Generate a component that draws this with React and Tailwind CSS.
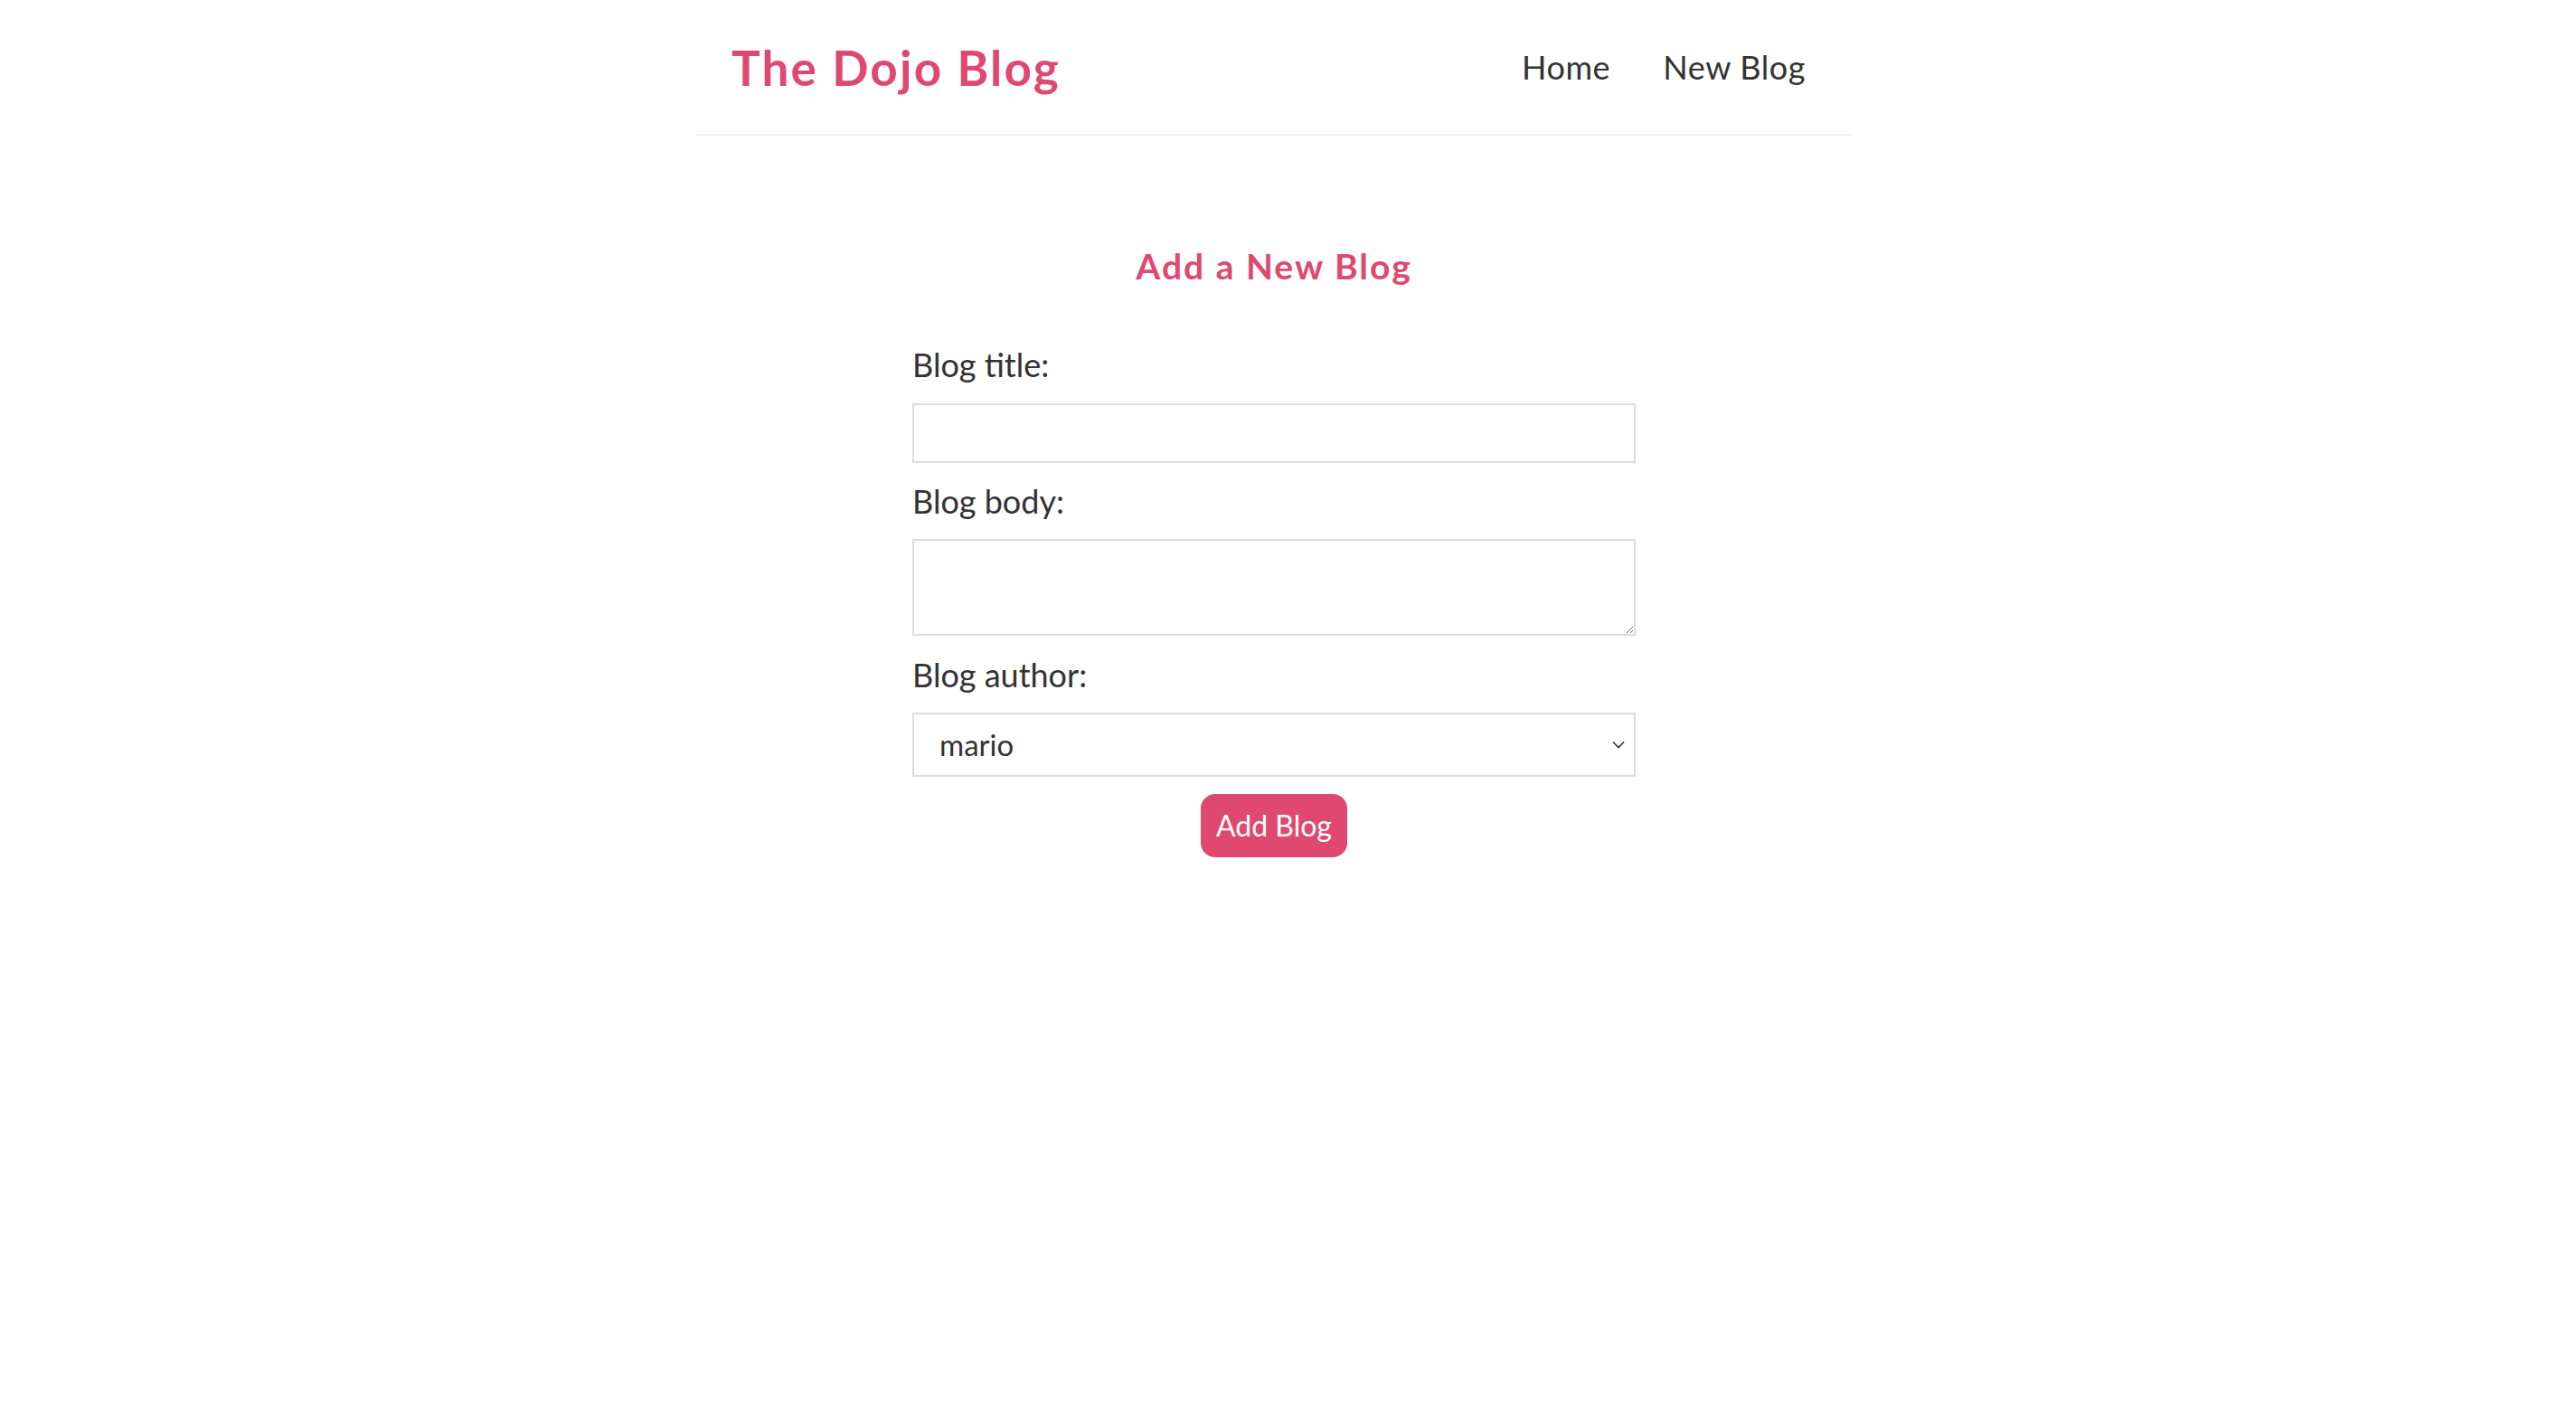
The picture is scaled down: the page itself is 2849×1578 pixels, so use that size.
import React from "react";

export default function App() {
  const font = { fontFamily: "Lato, 'Noto Sans', sans-serif" };
  return (
    <div className="w-[2818px] min-h-[1578px] bg-white text-[#333]" style={font}>
      <nav className="mx-auto flex h-[150px] w-[1280px] items-center border-b-2 border-[#f2f2f2] pl-[40px] pr-[52px]">
        <h1 className="text-[53px] font-bold leading-none tracking-[2.2px] text-[#df496f]">The Dojo Blog</h1>
        <div className="ml-auto flex items-center gap-[58px] text-[36px] leading-none tracking-[0.6px]">
          <a href="#" className="text-[#333]">Home</a>
          <a href="#" className="text-[#333]">New Blog</a>
        </div>
      </nav>
      <div className="mx-auto flex w-[800px] flex-col">
        <h2 className="mt-[125px] text-center text-[39px] font-bold leading-none tracking-[2px] text-[#df496f]">
          Add a New Blog
        </h2>
        <form className="flex flex-col" onSubmit={(e) => e.preventDefault()}>
          <label className="mt-[71px] block text-left text-[36px] leading-none">Blog title:</label>
          <input
            type="text"
            className="mt-[25px] block h-[66px] w-full border-2 border-[#ddd] px-[20px] text-[34px] outline-none"
          />
          <label className="mt-[24px] block text-left text-[36px] leading-none">Blog body:</label>
          <textarea className="mt-[24px] block h-[107px] w-full border-2 border-[#ddd] px-[20px] py-[12px] text-[34px] outline-none" />
          <label className="mt-[25px] block text-left text-[36px] leading-none">Blog author:</label>
          <div className="relative mt-[24px] h-[71px] w-full">
            <select
              className="block h-[71px] w-full appearance-none border-2 border-[#ddd] bg-white pl-[28px] text-[33px] text-[#333] outline-none"
              defaultValue="mario"
            >
              <option value="mario">mario</option>
              <option value="yoshi">yoshi</option>
            </select>
            <svg
              className="pointer-events-none absolute right-[12px] top-[31px]"
              width="14"
              height="9"
              viewBox="0 0 14 9"
              fill="none"
            >
              <path d="M1 1.5 L7 7.5 L13 1.5" stroke="#333" strokeWidth="1.6" />
            </svg>
          </div>
          <div className="mt-[19px] flex justify-center">
            <button className="h-[70px] w-[162px] rounded-[16px] bg-[#df496f] text-[32px] leading-none text-white">
              Add Blog
            </button>
          </div>
        </form>
      </div>
    </div>
  );
}
